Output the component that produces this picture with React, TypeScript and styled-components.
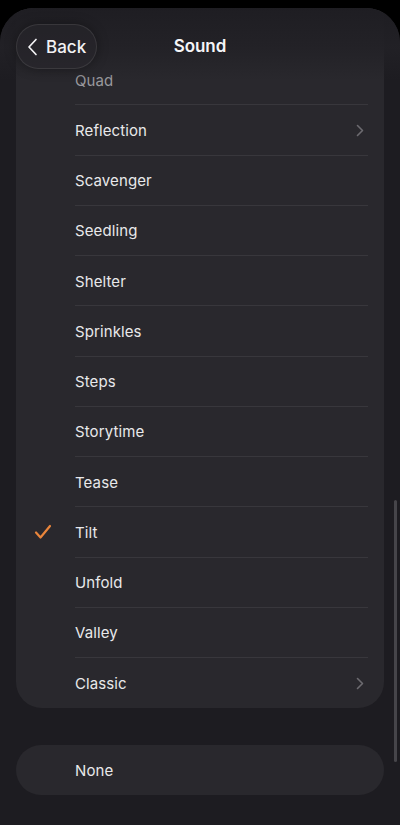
import React from 'react';
import styled, { createGlobalStyle } from 'styled-components';

const Global = createGlobalStyle`
  html, body {
    margin: 0;
    padding: 0;
    background: #000;
  }
  body {
    font-family: Inter, 'Noto Sans', sans-serif;
    -webkit-font-smoothing: antialiased;
  }
`;

const Screen = styled.div`
  width: 400px;
  height: 825px;
  overflow: hidden;
  background: #000;
  padding-top: 8px;
  box-sizing: border-box;
  position: relative;
`;

const Sheet = styled.div`
  position: relative;
  height: 817px;
  background: #1d1c21;
  border-radius: 34px 34px 0 0;
  overflow: hidden;
  padding: 0 16px;
  box-sizing: border-box;
  display: flex;
  flex-direction: column;
`;

// blurred bar on top of the scrolled list
const Header = styled.div`
  position: absolute;
  top: 0;
  left: 0;
  right: 0;
  height: 72px;
  background: linear-gradient(
    to bottom,
    rgba(30, 29, 34, 0.96) 0%,
    rgba(34, 33, 38, 0.9) 55%,
    rgba(40, 39, 44, 0) 100%
  );
  display: flex;
  align-items: flex-start;
  justify-content: center;
  padding-top: 28px;
  box-sizing: border-box;
  z-index: 2;
`;

const BackButton = styled.button`
  position: absolute;
  left: 16px;
  top: 16px;
  height: 45px;
  padding: 0 10px 0 10px;
  border-radius: 23px;
  border: 1px solid rgba(255, 255, 255, 0.09);
  background: rgba(40, 39, 44, 0.55);
  display: flex;
  align-items: center;
  gap: 8px;
  color: #f2f2f4;
  font-family: inherit;
  font-size: 17px;
  font-weight: 500;
  box-shadow: 0 0 12px rgba(0, 0, 0, 0.35);
`;

const Title = styled.div`
  color: #f5f5f7;
  font-size: 17px;
  line-height: 20px;
  font-weight: 600;
  letter-spacing: -0.1px;
`;

const Card = styled.div`
  background: #29282d;
  border-radius: 0 0 26px 26px;
  padding-top: 47px;
  overflow: hidden;
`;

const Row = styled.div<{ $dim?: boolean; $last?: boolean }>`
  position: relative;
  height: 50.25px;
  display: flex;
  align-items: center;
  padding-left: 59px;
  padding-right: 16px;
  color: ${(p) => (p.$dim ? '#9a999e' : '#e8e8ea')};
  font-size: 15px;
  letter-spacing: 0.1px;

  &::after {
    content: '';
    display: ${(p) => (p.$last ? 'none' : 'block')};
    position: absolute;
    left: 59px;
    right: 16px;
    bottom: 0;
    height: 1px;
    background: #38373c;
  }
`;

const Label = styled.span`
  flex: 1;
`;

const Check = styled.span`
  position: absolute;
  left: 18px;
  top: 50%;
  transform: translateY(-50%);
  display: flex;
`;

const Chevron = styled.span`
  display: flex;
  margin-right: 4px;
`;

const NoneCard = styled.div`
  margin-top: 37px;
  height: 50px;
  border-radius: 25px;
  background: #29282d;
  display: flex;
  align-items: center;
  padding-left: 59px;
  color: #e8e8ea;
  font-size: 15px;
  letter-spacing: 0.1px;
`;

const ScrollThumb = styled.div`
  position: absolute;
  right: 3px;
  top: 500px;
  width: 3px;
  height: 262px;
  border-radius: 2px;
  background: #46454a;
  z-index: 3;
`;

const sounds = [
  { name: 'Quad', dim: true },
  { name: 'Reflection', more: true },
  { name: 'Scavenger' },
  { name: 'Seedling' },
  { name: 'Shelter' },
  { name: 'Sprinkles' },
  { name: 'Steps' },
  { name: 'Storytime' },
  { name: 'Tease' },
  { name: 'Tilt', selected: true },
  { name: 'Unfold' },
  { name: 'Valley' },
  { name: 'Classic', more: true },
];

const ChevronRight = () => (
  <svg width="8" height="13" viewBox="0 0 8 13" fill="none">
    <path d="M1.5 1.5 L6.5 6.5 L1.5 11.5" stroke="#6c6b70" strokeWidth="1.6" strokeLinecap="round" strokeLinejoin="round" />
  </svg>
);

const ChevronLeft = () => (
  <svg width="11" height="18" viewBox="0 0 11 18" fill="none">
    <path d="M9 1.5 L2 9 L9 16.5" stroke="#f2f2f4" strokeWidth="1.7" strokeLinecap="round" strokeLinejoin="round" />
  </svg>
);

const CheckMark = () => (
  <svg width="18" height="16" viewBox="0 0 18 16" fill="none">
    <path d="M2 8.5 L6.5 13.5 L16 2" stroke="#e9853b" strokeWidth="2.2" strokeLinecap="round" strokeLinejoin="round" />
  </svg>
);

export default function App() {
  return (
    <Screen>
      <Global />
      <Sheet>
        <Header>
          <BackButton>
            <ChevronLeft />
            Back
          </BackButton>
          <Title>Sound</Title>
        </Header>
        <Card>
          {sounds.map((s, i) => (
            <Row key={s.name} $dim={s.dim} $last={i === sounds.length - 1}>
              {s.selected && (
                <Check>
                  <CheckMark />
                </Check>
              )}
              <Label>{s.name}</Label>
              {s.more && (
                <Chevron>
                  <ChevronRight />
                </Chevron>
              )}
            </Row>
          ))}
        </Card>
        <NoneCard>None</NoneCard>
      </Sheet>
      <ScrollThumb />
    </Screen>
  );
}
